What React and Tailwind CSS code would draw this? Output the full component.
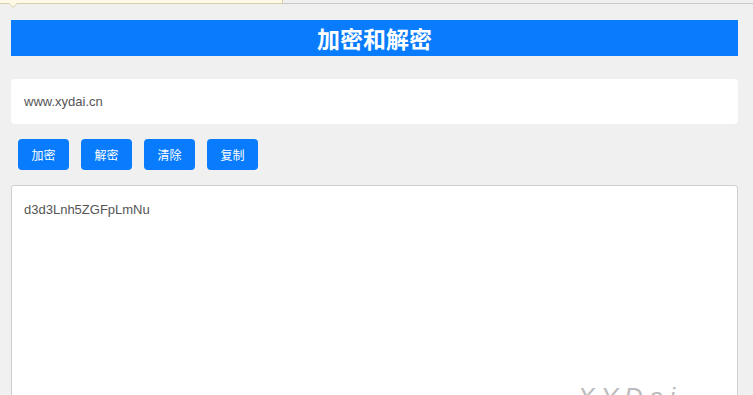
export default function App() {
  return (
    <div className="w-[753px] h-[395px] overflow-hidden bg-[#f0f0f0] relative" style={{ fontFamily: '"Liberation Sans", Arial, "Noto Sans CJK SC", sans-serif' }}>
      {/* top strip with tooltip remnant */}
      <div className="h-[4px] border-b border-[#c8c8c8] relative">
        <div className="absolute left-0 top-0 w-[283px] h-[4px] bg-[#fdf9e6] border-r border-b border-[#d8cfa8]" />
        <div className="absolute left-[8px] top-[3px] w-0 h-0 border-l-[5px] border-r-[5px] border-t-[5px] border-l-transparent border-r-transparent border-t-[#d8cfa8]" />
        <div className="absolute left-[9px] top-[3px] w-0 h-0 border-l-[4px] border-r-[4px] border-t-[4px] border-l-transparent border-r-transparent border-t-[#fdf9e6]" />
      </div>
      <div className="pl-[11px] pr-[15px] pt-[16px] flex flex-col">
        <div className="h-[36px] bg-[#087cfc] flex items-center justify-center">
          <span className="text-white text-[23px] font-bold leading-none" style={{ fontFamily: '"Noto Sans CJK SC", sans-serif' }}>加密和解密</span>
        </div>
        <div className="mt-[23px] h-[45px] bg-white rounded-[4px] flex items-center pl-[13px] text-[13px] text-[#555]">
          www.xydai.cn
        </div>
        <div className="mt-[15px] flex gap-[12px] pl-[7px]">
          {["加密", "解密", "清除", "复制"].map((t) => (
            <div key={t} className="w-[51px] h-[31px] bg-[#087cfc] rounded-[4px] flex items-center justify-center text-white text-[12px]" style={{ fontFamily: '"Noto Sans CJK SC", sans-serif' }}>
              {t}
            </div>
          ))}
        </div>
        <div className="mt-[15px] h-[230px] bg-white border border-[#cfcfcf] rounded-[3px] pl-[12px] pt-[14px] text-[13px] text-[#555] flex flex-col">
          <div>d3d3Lnh5ZGFpLmNu</div>
          <div className="self-end mr-[56px] mt-[164px] text-[26px] leading-none italic text-[#bbb] tracking-[6px]">XYDai</div>
        </div>
      </div>
    </div>
  );
}
